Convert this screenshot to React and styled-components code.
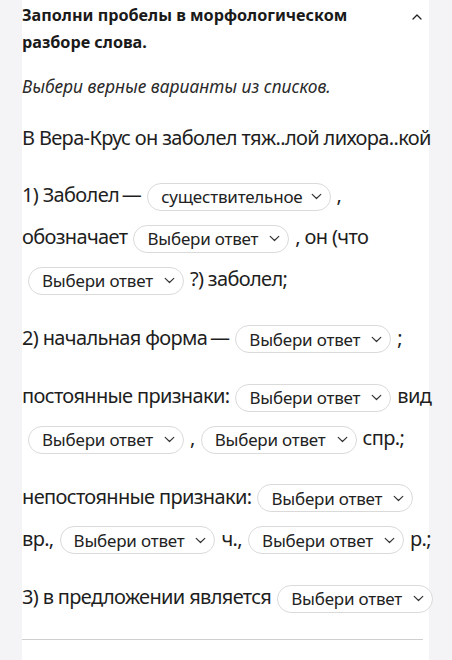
import React from "react";
import styled, { createGlobalStyle } from "styled-components";

const Global = createGlobalStyle`
  html, body { margin: 0; padding: 0; background: #f4f4f7; }
  body { font-family: "Noto Sans", "Open Sans", sans-serif; color: #1e1e1e; }
`;

const Page = styled.div`
  padding: 0 23px 0 22px;
  min-height: 660px;
`;

const Card = styled.section`
  background: #ffffff;
  padding-top: 2px;
  min-height: 658px;
  display: flex;
  flex-direction: column;
`;

const Header = styled.div`
  display: flex;
  justify-content: space-between;
  align-items: flex-start;
`;

const Title = styled.h2`
  margin: 0;
  max-width: 360px;
  font-size: 16.2px;
  font-weight: 700;
  line-height: 27px;
  color: #1a1a1a;
`;

const Toggle = styled.button`
  border: 0;
  background: none;
  padding: 0;
  margin: 9px 6px 0 0;
  width: 12px;
  height: 12px;
  display: flex;
  align-items: center;
  justify-content: center;
  color: #333;
`;

const Hint = styled.p`
  margin: 18px 0 0;
  font-size: 17.4px;
  font-style: italic;
  line-height: 24px;
  color: #2a2a2a;
`;

const Sentence = styled.p`
  margin: 25px 0 0;
  font-size: 20px;
  letter-spacing: -0.65px;
  line-height: 30px;
  white-space: nowrap;
`;

const Exercise = styled.div`
  margin-top: 21px;
  display: flex;
  flex-direction: column;
  gap: 16.5px;
`;

const Para = styled.p`
  margin: 0;
  font-size: 20px;
  letter-spacing: -0.65px;
  line-height: 42px;
  white-space: nowrap;
`;

const Select = styled.button`
  display: inline-flex;
  align-items: center;
  gap: ${(p) => (p.$tight ? 8 : 11)}px;
  height: 28px;
  box-sizing: border-box;
  margin: 0 6px;
  padding: 0 8px 0 13px;
  border: 1px solid #dadada;
  border-radius: 14px;
  background: #fff;
  font-family: "Noto Sans", "Open Sans", sans-serif;
  font-size: 17px;
  letter-spacing: -0.2px;
  color: #222;
  vertical-align: middle;
  cursor: pointer;
`;

const Divider = styled.hr`
  margin: 21px 6px 0 0;
  border: 0;
  border-top: 1.5px solid #cfcfcf;
`;

const ChevronDown = () => (
  <svg width="11" height="7" viewBox="0 0 11 7" fill="none">
    <path d="M1.2 1.4 L5.5 5.5 L9.8 1.4" stroke="#333" strokeWidth="1.2" strokeLinecap="round" strokeLinejoin="round" />
  </svg>
);

const ChevronUp = () => (
  <svg width="10" height="6" viewBox="0 0 10 6" fill="none">
    <path d="M1 5 L5 1 L9 5" stroke="#222" strokeWidth="1.3" strokeLinecap="round" strokeLinejoin="round" />
  </svg>
);

const Pick = ({ children = "Выбери ответ", tight }) => (
  <Select type="button" $tight={tight}>
    {children}
    <ChevronDown />
  </Select>
);

export default function App() {
  return (
    <>
      <Global />
      <Page>
        <Card>
          <Header>
            <Title>Заполни пробелы в морфологическом разборе слова.</Title>
            <Toggle type="button" aria-label="Свернуть">
              <ChevronUp />
            </Toggle>
          </Header>
          <Hint>Выбери верные варианты из списков.</Hint>
          <Sentence>В Вера-Крус он заболел тяж..лой лихора..кой</Sentence>
          <Exercise>
            <Para>
              1) Заболел{"\u2009"}—<Pick tight>существительное</Pick>,
              <br />
              обозначает<Pick />, он (что
              <br />
              <Pick />?) заболел;
            </Para>
            <Para>
              2) начальная форма{"\u2009"}—<Pick />;
            </Para>
            <Para>
              постоянные признаки:<Pick />вид
              <br />
              <Pick />,<Pick />спр.;
            </Para>
            <Para>
              непостоянные признаки:<Pick />
              <br />
              вр.,<Pick />ч.,<Pick />р.;
            </Para>
            <Para>
              3) в предложении является<Pick />
            </Para>
          </Exercise>
          <Divider />
        </Card>
      </Page>
    </>
  );
}
